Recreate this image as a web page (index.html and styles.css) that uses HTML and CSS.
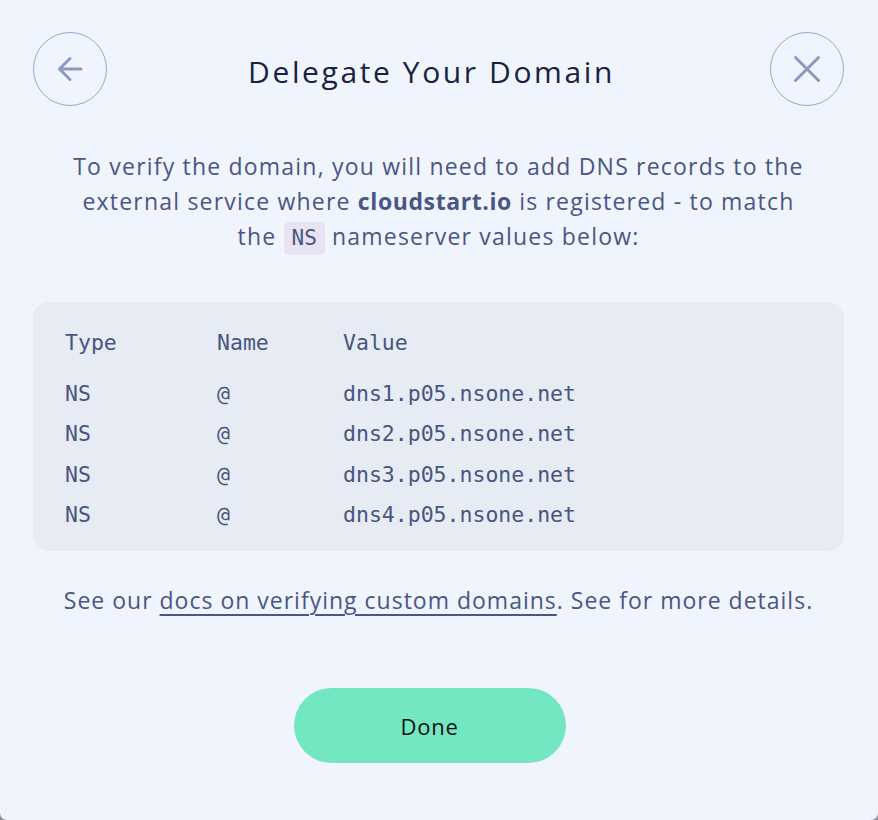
FILE: index.html
```html
<!DOCTYPE html>
<html lang="en">
<head>
<meta charset="utf-8">
<title>Delegate Your Domain</title>
<link rel="stylesheet" href="styles.css">
</head>
<body>
<div class="modal">
  <div class="header">
    <button class="circle-btn" aria-label="Back">
      <svg width="28" height="28" viewBox="0 0 28 28" fill="none" stroke="currentColor" stroke-width="3" stroke-linecap="round" stroke-linejoin="round"><path d="M25 14H3.5M14 3.5L3.5 14L14 24.5"/></svg>
    </button>
    <h1 class="title">Delegate Your Domain</h1>
    <button class="circle-btn" aria-label="Close">
      <svg width="28" height="28" viewBox="0 0 28 28" fill="none" stroke="currentColor" stroke-width="3" stroke-linecap="round"><path d="M2.5 2.5L25.5 25.5M25.5 2.5L2.5 25.5"/></svg>
    </button>
  </div>
  <p class="intro">To verify the domain, you will need to add DNS records to the<br>external service where <strong>cloudstart.io</strong> is registered - to match<br>the <code class="chip">NS</code> nameserver values below:</p>
  <div class="records">
    <div class="row head"><span>Type</span><span>Name</span><span>Value</span></div>
    <div class="row"><span>NS</span><span>@</span><span>dns1.p05.nsone.net</span></div>
    <div class="row"><span>NS</span><span>@</span><span>dns2.p05.nsone.net</span></div>
    <div class="row"><span>NS</span><span>@</span><span>dns3.p05.nsone.net</span></div>
    <div class="row"><span>NS</span><span>@</span><span>dns4.p05.nsone.net</span></div>
  </div>
  <p class="note">See our <a href="#">docs on verifying custom domains</a>. See for more details.</p>
  <div class="actions">
    <button class="done">Done</button>
  </div>
</div>
</body>
</html>
```
FILE: styles.css
```css
html, body {
  margin: 0;
  padding: 0;
}
body {
  background: #8a8e99;
  font-family: "Open Sans", "Lato", sans-serif;
}
.modal {
  box-sizing: border-box;
  height: 820px;
  background: #f0f4fd;
  border-radius: 0 0 7px 7px;
  padding: 32px 34px 0 33px;
  display: flex;
  flex-direction: column;
  align-items: stretch;
}
.header {
  display: flex;
  align-items: center;
  height: 74px;
}
.circle-btn {
  width: 74px;
  height: 74px;
  flex: 0 0 74px;
  border-radius: 50%;
  border: 1.5px solid #9aa8c9;
  background: transparent;
  color: #8c9abd;
  display: flex;
  align-items: center;
  justify-content: center;
  padding: 0;
}
.title {
  flex: 1;
  margin: 0;
  padding: 4px 14px 0 0;
  text-align: center;
  font-weight: 400;
  font-size: 30px;
  letter-spacing: 2.6px;
  color: #19223f;
  white-space: nowrap;
}
.intro {
  margin: 43px 0 0;
  text-align: center;
  font-size: 23px;
  line-height: 35px;
  color: #4a5683;
  letter-spacing: 1.2px;
  white-space: nowrap;
}
.intro strong {
  font-weight: 700;
  letter-spacing: 0.6px;
}
.chip {
  font-family: "DejaVu Sans Mono", monospace;
  font-size: 21px;
  letter-spacing: 0;
  background: #e8e3f1;
  border-radius: 5px;
  padding: 4px 8px 5px;
  color: #4a5683;
}
.records {
  margin-top: 46px;
  background: #e6ebf4;
  border-radius: 16px;
  height: 249px;
  box-sizing: border-box;
  padding: 21px 32px 0;
  font-family: "DejaVu Sans Mono", monospace;
  font-size: 21.5px;
  color: #48567f;
}
.row {
  display: grid;
  grid-template-columns: 152px 126px 1fr;
  line-height: 40.6px;
  height: 40.6px;
}
.row.head {
  margin-bottom: 10px;
}
.note {
  margin: 33px 0 0;
  text-align: center;
  font-size: 23px;
  color: #4a5683;
  letter-spacing: 1px;
  white-space: nowrap;
}
.note a {
  color: #4a5683;
  text-decoration: underline;
  text-underline-offset: 5px;
  text-decoration-thickness: 1.5px;
}
.actions {
  display: flex;
  justify-content: center;
  padding-right: 18px;
  margin-top: 72px;
}
.done {
  width: 272px;
  height: 75px;
  border: none;
  border-radius: 38px;
  background: #73e6c2;
  color: #111;
  font-family: "Open Sans", "Lato", sans-serif;
  font-size: 22px;
  letter-spacing: 0.8px;
}
```
